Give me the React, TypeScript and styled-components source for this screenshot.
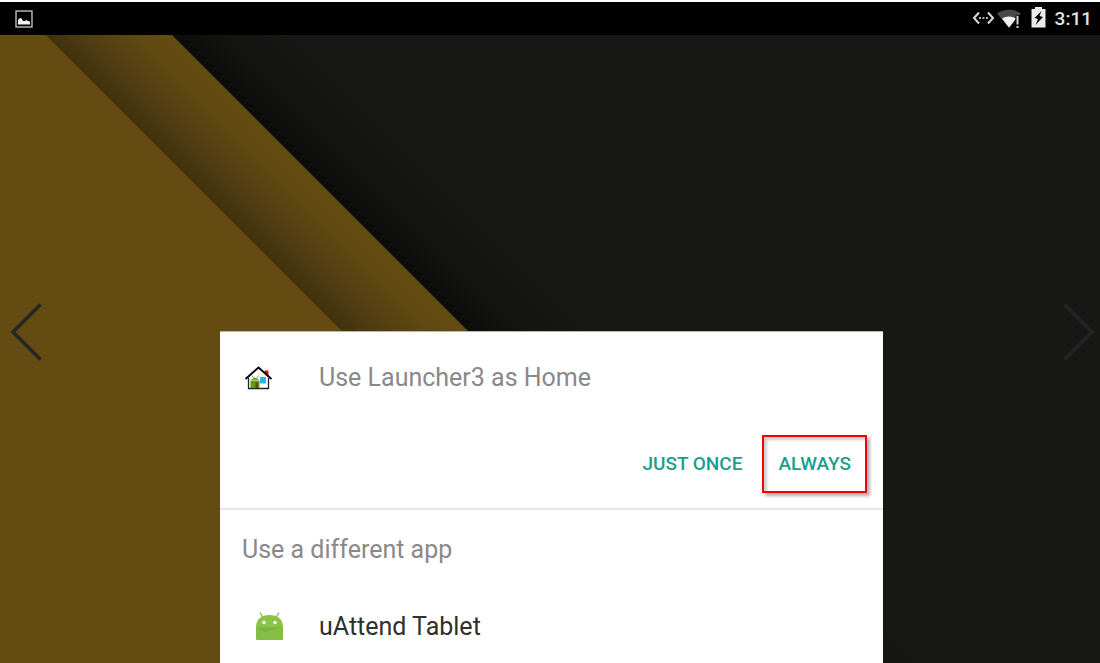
import React from "react";
import styled, { createGlobalStyle } from "styled-components";

const GlobalStyle = createGlobalStyle`
  * { box-sizing: border-box; }
  body { margin: 0; background: #171715; font-family: Roboto, "Liberation Sans", sans-serif; }
  button { font: inherit; border: 0; margin: 0; padding: 0; background: none; cursor: pointer; }
  h1, h2 { margin: 0; font-weight: 400; }
  svg { display: block; }
`;

const Screen = styled.div`
  position: relative;
  min-height: 100vh;
  display: flex;
  flex-direction: column;
  overflow: hidden;
`;

const StatusBar = styled.header`
  display: flex;
  align-items: center;
  justify-content: space-between;
  height: 35px;
  padding: 0 8px 0 15px;
  border-top: 2px solid #fff;
  background: #000;
  color: #e4e4e4;
`;

const StatusIcons = styled.div`
  display: flex;
  align-items: center;
`;

const Battery = styled.svg`
  margin: 0 9px 2px 8px;
`;

const Clock = styled.time`
  font-size: 19px;
  line-height: 24px;
  font-weight: 500;
`;

const Desktop = styled.main`
  position: relative;
  flex: 1;
  display: grid;
  grid-template-columns: 220px minmax(0, 1fr) 217px;
  padding-top: 296px;
`;

const Wallpaper = styled.svg`
  position: absolute;
  inset: 0;
  width: 100%;
  height: 100%;
`;

const Dialog = styled.section`
  position: relative;
  grid-column: 2;
  display: flex;
  flex-direction: column;
  background: #fff;
  border-top: 1px solid #b9b5ab;
`;

const DefaultApp = styled.div`
  display: flex;
  align-items: center;
  height: 91px;
  padding-left: 24px;
`;

const Title = styled.h1`
  margin-left: 46px;
  font-size: 25px;
  line-height: 32px;
  color: #898989;
`;

const Actions = styled.div`
  display: flex;
  justify-content: flex-end;
  padding: 12px 16px 15px 0;
  border-bottom: 2px solid #e6e6e6;
`;

const ActionButton = styled.button<{ $highlighted?: boolean }>`
  height: 58px;
  padding: 0 ${(p) => (p.$highlighted ? 14 : 20)}px;
  border: ${(p) => (p.$highlighted ? "2px solid #f80000" : "0")};
  box-shadow: ${(p) =>
    p.$highlighted
      ? "3px 3px 3px rgba(0,0,0,.3), inset 3px 3px 3px rgba(0,0,0,.2)"
      : "none"};
  font-size: 19px;
  line-height: 24px;
  font-weight: 500;
  color: #1b9e8f;
`;

const Subtitle = styled.h2`
  padding: 24px 22px;
  font-size: 25px;
  line-height: 32px;
  color: #898989;
`;

const AppRow = styled.button`
  display: flex;
  align-items: center;
  height: 73px;
  padding-left: 35px;
  text-align: left;
`;

const AppName = styled.span`
  margin-left: 35px;
  font-size: 25px;
  line-height: 32px;
  color: #2f2f2f;
`;

const PageArrow = styled.button<{ $side: "left" | "right" }>`
  position: absolute;
  top: 50%;
  ${(p) => (p.$side === "left" ? "left: 10px" : "right: 5px")};
  transform: translateY(-50%);
  color: ${(p) => (p.$side === "left" ? "#262626" : "#242424")};
`;

const WallpaperArt = () => (
  <Wallpaper viewBox="0 0 1100 628" preserveAspectRatio="xMinYMin slice" aria-hidden="true">
    <defs>
      <linearGradient id="band" gradientUnits="userSpaceOnUse" x1="46" y1="0" x2="109" y2="-63">
        <stop offset="0" stopColor="#40310f" />
        <stop offset="0.15" stopColor="#483810" />
        <stop offset="0.38" stopColor="#543f11" />
        <stop offset="0.7" stopColor="#5f4911" />
        <stop offset="1" stopColor="#644c11" />
      </linearGradient>
      <linearGradient id="dark" gradientUnits="userSpaceOnUse" x1="172" y1="0" x2="232" y2="-60">
        <stop offset="0" stopColor="#0c0c0b" />
        <stop offset="0.4" stopColor="#121211" />
        <stop offset="1" stopColor="#171715" />
      </linearGradient>
    </defs>
    <rect width="1100" height="628" fill="url(#dark)" />
    <path d="M0 0H172L800 628H0Z" fill="url(#band)" />
    <path d="M0 0H46L674 628H0Z" fill="#644b11" />
  </Wallpaper>
);

const PictureIcon = () => (
  <svg width="18" height="18" viewBox="0 0 18 18" aria-hidden="true">
    <rect x="1" y="1" width="16" height="16" fill="none" stroke="#bdbdbd" strokeWidth="1.4" />
    <path d="M3 14.5V10l2-2 1.5.5L8 11h2l1.500-1 1.500 1 2 .5v3Z" fill="#f4f4f4" />
  </svg>
);

const EthernetIcon = () => (
  <svg width="22" height="20" viewBox="0 0 22 20" aria-hidden="true">
    <path d="M7 3.500 2 9l5 5.500M16 3.500 21 9l-5 5.500" fill="none" stroke="#d8d8d8" strokeWidth="2" />
    <path d="M7 8h2v2H7zM10.500 8h2v2h-2zM14 8h2v2h-2z" fill="#b0b0b0" />
  </svg>
);

const WifiIcon = () => (
  <svg width="29" height="22" viewBox="0 0 29 22" aria-hidden="true">
    <path d="M3 5.500C10 .5 20 .5 27 5.500L15 20Z" fill="#484848" />
    <path d="M8 10.500C12 7.800 18 7.800 22 10.500L15 19.500Z" fill="#f2f2f2" />
    <path d="M21.500 7.500h7v14h-7Z" fill="#000" />
    <path d="M22.500 8h2v8.500h-2zM22.500 18h2v2h-2z" fill="#d4d4d4" />
  </svg>
);

const BatteryIcon = () => (
  <Battery width="15" height="21" viewBox="0 0 15 21" aria-hidden="true">
    <path d="M4 0h7v2H14.500v18.500H.5V2H4Z" fill="#ececec" />
    <path d="M10.500 4 3.500 11l3.500 1-2.500 6 7.500-8-3.500-1Z" fill="#000" />
  </Battery>
);

const HomeIcon = () => (
  <svg width="29" height="24" viewBox="0 0 29 24" aria-hidden="true">
    <path d="M20.500 4.500h4V12L20.500 9Z" fill="#d90f0f" />
    <path d="M4.500 12 14.500 2.500 24.500 12V22.500h-20Z" fill="#fff" />
    <path d="M4.500 12V22.500h20V12" fill="none" stroke="#222" strokeWidth="1.300" />
    <path d="M6.500 14.500h9V22h-9Z" fill="#68980d" />
    <path d="M7 14q4-5 8 0Z" fill="#79a91f" />
    <path d="m8 9.500 1.500 2.500M14.500 9.500 13 12" stroke="#79a91f" />
    <path d="M11.500 16.500H14V22h-2.500Z" fill="#3e5c08" />
    <path d="M16 11h6v6.500h-6Z" fill="#2eb4ea" />
    <path d="M1.500 13 14.500 1.500 27.500 13" fill="none" stroke="#080808" strokeWidth="1.900" />
  </svg>
);

const AndroidIcon = () => (
  <svg width="29" height="29" viewBox="0 0 29 29" aria-hidden="true">
    <path d="m5 .5 3 5M24 .5l-3 5" stroke="#8bc34a" strokeWidth="1.400" />
    <path d="M1 15C1 7 6.500 3 14.500 3S28 7 28 15v11.500q0 1.500-1.500 1.500h-24Q1 28 1 26.500Z" fill="#8bc34a" />
    <path d="M1 15.500h27v11q0 1.500-1.500 1.500h-24Q1 28 1 26.500Z" fill="#86bd47" />
    <path d="M1 15.500h27L9 20Z" fill="#7db142" />
    <circle cx="9" cy="10.500" r="1.700" fill="#fff" />
    <circle cx="20" cy="10.500" r="1.700" fill="#fff" />
  </svg>
);

const Chevron = ({ points }: { points: string }) => (
  <svg width="32" height="58" viewBox="0 0 32 58" aria-hidden="true">
    <polyline points={points} fill="none" stroke="currentColor" strokeWidth="3.500" />
  </svg>
);

export default function App() {
  return (
    <Screen>
      <GlobalStyle />
      <StatusBar>
        <PictureIcon />
        <StatusIcons>
          <EthernetIcon />
          <WifiIcon />
          <BatteryIcon />
          <Clock>3:11</Clock>
        </StatusIcons>
      </StatusBar>
      <Desktop>
        <WallpaperArt />
        <Dialog aria-labelledby="chooser-title">
          <DefaultApp>
            <HomeIcon />
            <Title id="chooser-title">Use Launcher3 as Home</Title>
          </DefaultApp>
          <Actions>
            <ActionButton type="button">JUST ONCE</ActionButton>
            <ActionButton type="button" $highlighted>ALWAYS</ActionButton>
          </Actions>
          <Subtitle>Use a different app</Subtitle>
          <AppRow type="button">
            <AndroidIcon />
            <AppName>uAttend Tablet</AppName>
          </AppRow>
        </Dialog>
      </Desktop>
      <PageArrow type="button" $side="left" aria-label="Previous">
        <Chevron points="30.5,1.5 3,29 30.5,56.5" />
      </PageArrow>
      <PageArrow type="button" $side="right" aria-label="Next">
        <Chevron points="1.5,1.5 29,29 1.5,56.5" />
      </PageArrow>
    </Screen>
  );
}
